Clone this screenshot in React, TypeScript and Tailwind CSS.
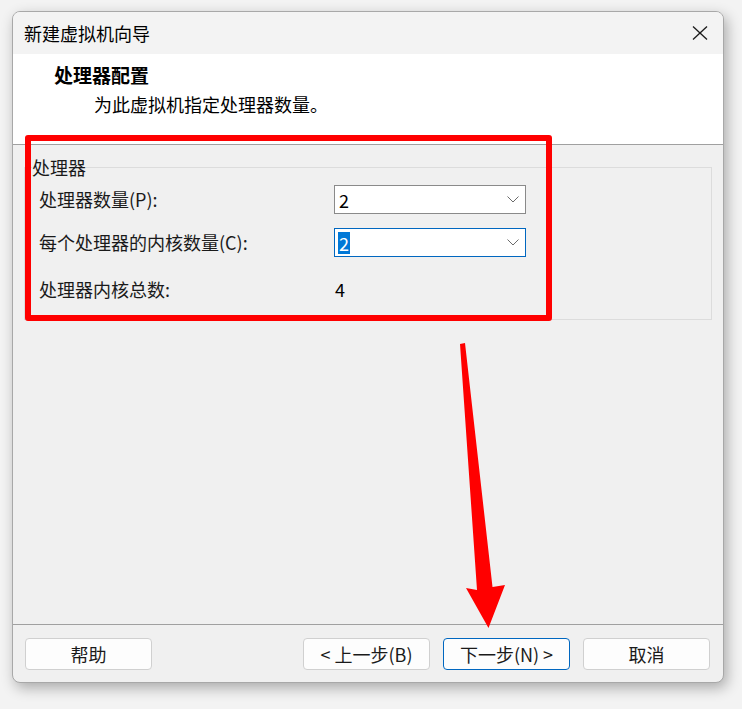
import React from 'react';

function Chevron() {
  return (
    <svg width="12" height="7" viewBox="0 0 12 7" className="shrink-0">
      <polyline points="0.5,0.5 6,6 11.5,0.5" fill="none" stroke="#6b6b6b" strokeWidth="1" />
    </svg>
  );
}

function Combo({ value, focused }: { value: string; focused?: boolean }) {
  return (
    <div
      className={
        focused
          ? 'w-[192px] h-[29px] bg-white border border-[#0067c0] flex items-center justify-between pl-[3px] pr-[6px]'
          : 'w-[192px] h-[29px] bg-white border border-[#8a8a8a] flex items-center justify-between pl-[3px] pr-[6px]'
      }
    >
      {focused ? (
        <span className="bg-[#0078d7] text-white text-[18px] leading-[22px] px-[1px]">{value}</span>
      ) : (
        <span className="text-black text-[18px] leading-[22px] px-[1px]">{value}</span>
      )}
      <Chevron />
    </div>
  );
}

function WizButton({ children, primary }: { children: React.ReactNode; primary?: boolean }) {
  return (
    <button
      className={
        primary
          ? 'w-[127px] h-[32px] rounded-[4px] bg-[#fdfdfd] border border-[#0067c0] text-[18px] text-[#1a1a1a] flex items-center justify-center'
          : 'w-[127px] h-[32px] rounded-[4px] bg-[#fdfdfd] border border-[#d0d0d0] text-[18px] text-[#1a1a1a] flex items-center justify-center'
      }
    >
      {children}
    </button>
  );
}

export default function App() {
  return (
    <div className="relative w-[742px] h-[709px] bg-[#f3f3f3] overflow-hidden pt-[11px] pl-[12px] font-['Noto_Sans_CJK_SC','Liberation_Sans',sans-serif] text-[#1a1a1a]">
      <div className="w-[712px] h-[672px] rounded-[8px] border border-[#a8a8a8] overflow-hidden flex flex-col bg-[#f0f0f0] shadow-[3px_5px_14px_rgba(0,0,0,0.3)]">
        {/* Title bar */}
        <div className="h-[42px] shrink-0 bg-[#f3f3f3] flex items-center justify-between pl-[11px] pr-[15px]">
          <span className="text-[18px] leading-[24px] text-black">新建虚拟机向导</span>
          <svg width="16" height="14" viewBox="0 0 16 14">
            <line x1="1" y1="0.5" x2="15" y2="13.5" stroke="#1a1a1a" strokeWidth="1.3" />
            <line x1="15" y1="0.5" x2="1" y2="13.5" stroke="#1a1a1a" strokeWidth="1.3" />
          </svg>
        </div>

        {/* Header */}
        <div className="h-[91px] shrink-0 bg-white border-b border-[#a0a0a0] pl-[41px] pt-[9px]">
          <div className="text-[19px] leading-[24px] font-bold text-black">处理器配置</div>
          <div className="text-[18px] leading-[24px] text-black pl-[40px] mt-[5px]">为此虚拟机指定处理器数量。</div>
        </div>

        {/* Body */}
        <div className="flex-1 px-[11px] pt-[12px]">
          <fieldset className="border border-[#dcdcdc] m-0 p-0 pb-[16px]">
            <legend className="ml-[7px] px-0 text-[18px] leading-[20px] bg-[#f0f0f0]">处理器</legend>
            <div className="flex flex-col pl-[14px] pt-[8px] text-[18px]">
              <div className="flex items-center h-[29px]">
                <span className="w-[295px]">处理器数量(P):</span>
                <Combo value="2" />
              </div>
              <div className="flex items-center h-[29px] mt-[14px]">
                <span className="w-[295px]">每个处理器的内核数量(C):</span>
                <Combo value="2" focused />
              </div>
              <div className="flex items-center h-[28px] mt-[18px]">
                <span className="w-[295px]">处理器内核总数:</span>
                <span className="text-black pl-[1px]">4</span>
              </div>
            </div>
          </fieldset>
        </div>

        {/* Footer */}
        <div className="h-[58px] shrink-0 border-t border-[#a0a0a0] flex items-start justify-between pl-[12px] pr-[13px] pt-[13px]">
          <WizButton>帮助</WizButton>
          <div className="flex gap-[13px]">
            <WizButton>&lt; 上一步(B)</WizButton>
            <WizButton primary>下一步(N) &gt;</WizButton>
            <WizButton>取消</WizButton>
          </div>
        </div>
      </div>

      {/* Annotation: red box */}
      <div className="absolute left-[25px] top-[135px] w-[527px] h-[186px] border-[6px] border-[#ff0000] rounded-[3px] pointer-events-none" />

      {/* Annotation: red arrow */}
      <svg className="absolute left-0 top-0 pointer-events-none" width="742" height="709" viewBox="0 0 742 709">
        <polygon points="460,344 465,343 492.5,587 505,585 488.5,628 466,588 477,590" fill="#ff0000" />
      </svg>
    </div>
  );
}
